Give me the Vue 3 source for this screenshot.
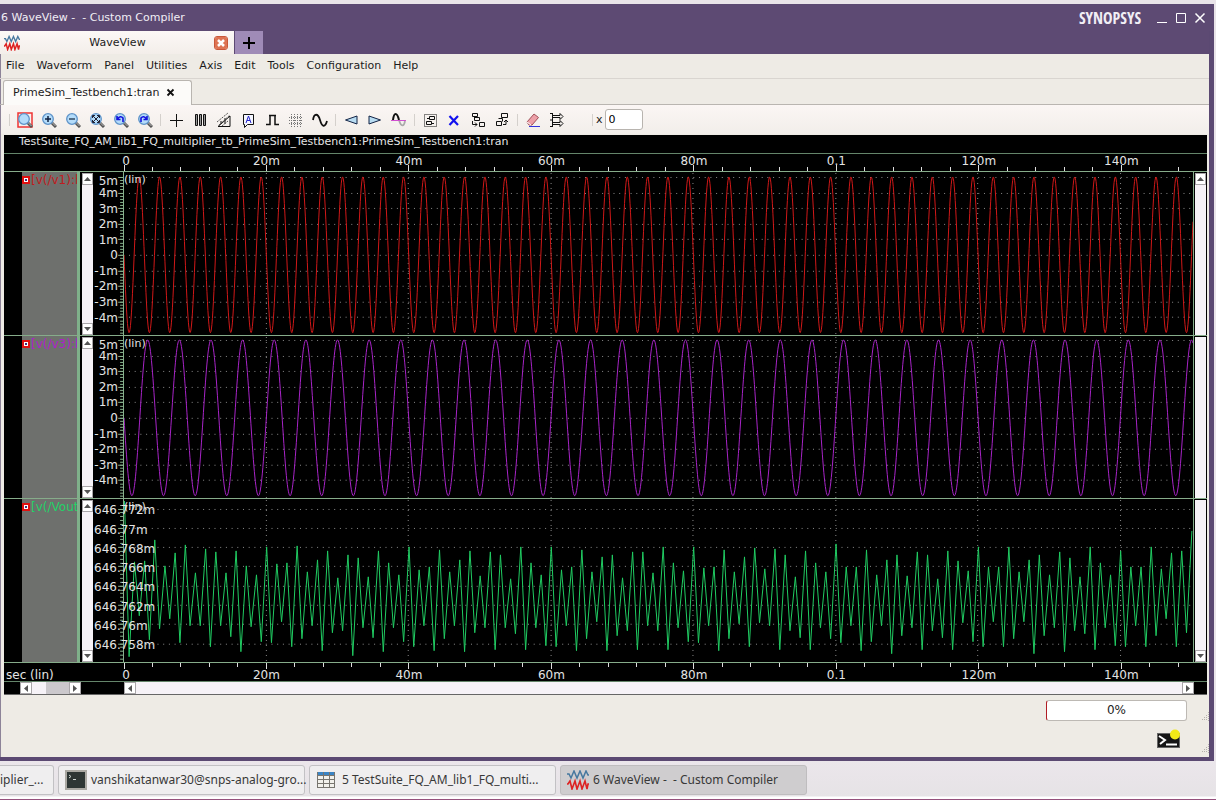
<script setup>
import { ref } from 'vue'

const menus = ['File', 'Waveform', 'Panel', 'Utilities', 'Axis', 'Edit', 'Tools', 'Configuration', 'Help']
const xValue = ref('0')

const W = 1070
const H = 163
const tMax = 0.1502
const xOf = (t) => (t / tMax) * W

const majors = [0, 0.02, 0.04, 0.06, 0.08, 0.1, 0.12, 0.14].map((t, i) => ({
  label: ['0', '20m', '40m', '60m', '80m', '0.1', '120m', '140m'][i],
  left: (t / tMax) * 100 + '%',
  x: Math.floor(xOf(t)) + 0.5,
}))
const minors = Array.from({ length: 38 }, (_, i) => i)
  .filter((i) => i % 5)
  .map((i) => Math.floor(xOf(i * 0.004)) + 0.5)

const sine = (freq, mid, amp) => {
  let d = ''
  for (let x = 0; x <= W; x += 0.5) {
    const t = (x / W) * tMax
    d += (x ? 'L' : 'M') + x + ' ' + (mid + amp * Math.sin(2 * Math.PI * freq * t)).toFixed(1)
  }
  return d
}

const peaks = [
  563, 562, 541, 567, 554, 546, 574, 550, 553, 574, 552, 567, 576, 548, 565, 564, 547, 573, 561, 552, 579, 556, 559, 578,
  552, 564, 576, 548, 571, 568, 551, 573, 561, 552, 577, 553, 556, 580, 548, 564, 576, 548, 571, 568, 551, 573, 558, 556,
  579, 553, 553, 574, 548, 564, 572, 548, 569, 568, 551, 573, 558, 549, 570, 550, 556, 578, 552, 564, 573, 545, 568, 568,
  551, 576, 561, 556, 577, 553, 556, 580, 552, 562, 572, 548, 568, 568, 548, 573, 561, 556, 576, 553, 559, 578, 548, 564,
  576, 552, 568, 568, 548, 570, 554, 552, 532,
]
const troughs = [
  658, 617, 641, 630, 620, 644, 627, 627, 648, 627, 638, 653, 628, 643, 644, 623, 648, 640, 627, 652, 634, 632, 657, 629,
  639, 653, 629, 643, 648, 627, 652, 640, 627, 653, 634, 629, 651, 629, 635, 651, 629, 647, 648, 627, 652, 640, 623, 652,
  637, 632, 651, 627, 632, 651, 629, 643, 644, 627, 652, 640, 625, 648, 624, 627, 651, 632, 639, 651, 629, 640, 644, 627,
  652, 643, 627, 655, 637, 629, 651, 632, 639, 651, 624, 643, 648, 623, 648, 640, 623, 655, 637, 629, 653, 632, 635, 651,
  629, 647, 648, 627, 648, 637, 620, 648, 634,
]
const half = xOf(1 / 1400)
let vout = 'M0.5 2'
troughs.forEach((t, k) => {
  vout += `L${((2 * k + 1) * half).toFixed(1)} ${t - 500}`
  vout += `L${Math.min(W - 1, (2 * k + 2) * half + 0.3).toFixed(1)} ${peaks[k] - 500}`
})

const ticksFrom = (first, step) => {
  const out = []
  for (let y = first; y > 3; y -= step) out.push(y)
  for (let y = first + step; y < H; y += step) out.push(y)
  return out.map((y) => Math.round(y) + 0.5)
}
const linear = (mid) => {
  const names = ['5m', '4m', '3m', '2m', '1m', '0', '-1m', '-2m', '-3m', '-4m']
  return names.map((label, i) => ({ label, y: mid + (i - 5) * 15.6, at: Math.max(9, mid + 0.5 + (i - 5) * 15.6) }))
}
const fine = ['646.772m', '646.77m', '646.768m', '646.766m', '646.764m', '646.762m', '646.76m', '646.758m'].map(
  (label, i) => ({ label, y: 9.5 + i * 19.3, at: 11 + i * 19.3 }),
)
const panels = [
  { name: '[v(/v1):h', color: 'red', labels: linear(83), ticks: ticksFrom(83, 3.12), d: sine(350, 83, 78), wide: false },
  { name: '[v(/v3):h', color: 'purple', labels: linear(82), ticks: ticksFrom(82, 3.12), d: sine(225, 82, 78), wide: false },
  { name: '[v(/Vout', color: 'green', labels: fine, ticks: ticksFrom(9.5, 3.86), d: vout, wide: true },
]

const tools = [
  [
    { n: 'Zoom box', k: 'zbox' },
    { n: 'Zoom in', k: 'zin' },
    { n: 'Zoom out', k: 'zout' },
    { n: 'Zoom fit', k: 'zfit' },
    { n: 'Undo zoom', k: 'zundo' },
    { n: 'Redo zoom', k: 'zredo' },
  ],
  [
    { n: 'Cursor', k: 'cross' },
    { n: 'Columns', k: 'cols' },
    { n: 'Measure', k: 'measure' },
    { n: 'Annotate', k: 'note' },
    { n: 'Pulse', k: 'pulse' },
    { n: 'Grid', k: 'grid' },
    { n: 'Sine', k: 'wave' },
  ],
  [
    { n: 'Previous', k: 'prev' },
    { n: 'Next', k: 'next' },
    { n: 'Threshold', k: 'thresh' },
  ],
  [
    { n: 'Select group', k: 'select' },
    { n: 'Delete', k: 'del' },
    { n: 'Ungroup', k: 'ungroup' },
    { n: 'Group', k: 'group' },
  ],
  [
    { n: 'Erase', k: 'erase' },
    { n: 'Export', k: 'export' },
  ],
]
</script>

<template>
  <div class="desktop">
    <main class="window">
      <header class="titlebar">
        <span class="caption">6 WaveView -&nbsp; - Custom Compiler</span>
        <span class="brand">SYNOPSYS</span>
        <button class="winbtn" aria-label="Minimize"><svg width="12" height="12"><path d="M1 10.5h10" /></svg></button>
        <button class="winbtn" aria-label="Maximize"><svg width="12" height="12"><path d="M1.500 1.500h9v9h-9z" /></svg></button>
        <button class="winbtn" aria-label="Close"><svg width="12" height="12"><path d="M1.500 1.500l9 9M10.500 1.500l-9 9" stroke-width="1.500" /></svg></button>
      </header>

      <div class="maintabs">
        <div class="maintab">
          <svg class="wicon" width="16" height="16" viewBox="0 0 22 20" fill="none">
            <path d="M0 4h2l2 4 3-7 3 7 3-7 3 7 3-7 2 4h1" stroke="#47789f" stroke-width="1.800" />
            <path d="M0 14h1l2-3 2 8 3-8 2 8 3-8 2 8 3-8 2 8 1-5h1" stroke="#d22" stroke-width="2" />
          </svg>
          <span>WaveView</span>
          <button class="tabclose" aria-label="Close WaveView">
            <svg width="12" height="12"><path d="M3 3l6 6M9 3l-6 6" stroke="#fff" stroke-width="2.500" /></svg>
          </button>
        </div>
        <button class="addtab" aria-label="New tab"><svg width="14" height="14"><path d="M7 1v12M1 7h12" stroke="#000" stroke-width="2" /></svg></button>
      </div>

      <nav class="menubar">
        <button v-for="m in menus" :key="m">{{ m }}</button>
      </nav>

      <div class="doctabs">
        <div class="doctab">
          <span>PrimeSim_Testbench1:tran</span>
          <button aria-label="Close document"><svg width="10" height="10"><path d="M1.500 1.500l6 6M7.500 1.500l-6 6" stroke="#111" stroke-width="1.800" /></svg></button>
        </div>
      </div>

      <div class="toolbar">
        <template v-for="(g, gi) in tools" :key="gi">
          <i class="sep" />
          <button v-for="t in g" :key="t.k" class="tool" :aria-label="t.n">
            <svg width="16" height="16" viewBox="0 0 16 16" fill="none" stroke="#111">
              <template v-if="t.k[0] === 'z'">
                <rect v-if="t.k === 'zbox'" x="1" y="1" width="14" height="14" stroke="#e33" stroke-width="1.500" />
                <path d="M10 10l5 5" stroke="#555" stroke-width="3" />
                <path d="M10.500 10l4 4" stroke="#bbb" stroke-width="1" />
                <circle cx="7" cy="7" r="5.300" fill="#b4dcfa" stroke="#5e93c9" stroke-width="1.300" />
                <path v-if="t.k === 'zin'" d="M4 7h6M7 4v6" stroke="#102040" stroke-width="1.500" />
                <path v-if="t.k === 'zout'" d="M4 7h6" stroke="#304860" stroke-width="1.500" />
                <path v-if="t.k === 'zfit'" d="M4 4l6 6M10 4l-6 6M3.500 6V3.500H6M8 3.500h2.500V6M10.500 8v2.500H8M6 10.500H3.500V8" stroke="#223" />
                <path v-if="t.k === 'zundo'" d="M4.500 7q3-4 5.500-1v4M4 4v3.500h3.500" stroke="#11d" stroke-width="1.600" />
                <path v-if="t.k === 'zredo'" d="M9.500 7q-3-4-5.500-1v4M10 4v3.500H6.500" stroke="#11d" stroke-width="1.600" />
              </template>
              <path v-else-if="t.k === 'cross'" d="M8.500 2v13M2 8.500h13" />
              <path v-else-if="t.k === 'cols'" d="M3.500 2.500h2v11h-2zM7.500 2.500h2v11h-2zM11.500 2.500h2v11h-2z" fill="#999" />
              <g v-else-if="t.k === 'measure'">
                <path d="M2 14.500h12V4zM5 9v3M9 6v6" />
                <path d="M1 10L12 1M3 13L14 3M6 14l6-5" stroke="#555" stroke-dasharray="2 1" />
              </g>
              <g v-else-if="t.k === 'note'">
                <path d="M3.500 2.500h10v10h-6l-3 3v-3h-1z" fill="#f4f6ff" />
                <path d="M6 11l2.500-7L11 11M7 8.500h3" stroke="#22c" />
              </g>
              <path v-else-if="t.k === 'pulse'" d="M2 12.500h4v-9h5v9h4M5 3.500h7" stroke-width="1.500" />
              <path v-else-if="t.k === 'grid'" d="M3.500 2v13M6.500 2v13M9.500 2v13M12.500 2v13M1 5.500h14M1 8.500h14M1 11.500h14" stroke="#777" stroke-dasharray="1 1" />
              <path v-else-if="t.k === 'wave'" d="M1 8C2 1 6 1 8 8s5 8 7 1" stroke-width="1.800" />
              <path v-else-if="t.k === 'prev'" d="M14 4v8L2.500 8z" fill="#b8dcf2" stroke="#124" />
              <path v-else-if="t.k === 'next'" d="M2 4v8l11.500-4z" fill="#b8dcf2" stroke="#124" />
              <g v-else-if="t.k === 'thresh'">
                <path d="M8 8c2 7 5 7 6 1" stroke="#aaa" stroke-width="1.800" />
                <path d="M2 8C3 0 6 0 8 8" stroke-width="2" />
                <path d="M0 8.500h15" stroke="#d050d0" />
              </g>
              <g v-else-if="t.k === 'select'">
                <rect x="2.500" y="2.500" width="12" height="12" stroke-dasharray="1 1" />
                <path d="M7.500 4.500h5v3h-5zM4.500 9.500h5v3h-5zM5 6.500h2M10 11.500h2" />
              </g>
              <path v-else-if="t.k === 'del'" d="M3.500 4l8.500 9M12 4l-8.500 9" stroke="#11e" stroke-width="2.200" />
              <path v-else-if="t.k === 'ungroup'" d="M2.500 1.500h5v3h-5zM4.500 5v3.500h5v-3h-5M9.500 10.500h5v4h-5zM2.500 9v3.500H7M5 10.500l2 2-2 2" />
              <path v-else-if="t.k === 'group'" d="M7.500 1.500h6v4h-6zM4.500 6.500h4v3M2.500 9.500h5v4h-5zM9 12.500h3V8M10 10l2-2 2 2" />
              <g v-else-if="t.k === 'erase'">
                <path d="M2 10l7-8 4.500 3.500L7 13H4z" fill="#eda0a8" stroke="#a05058" />
                <path d="M2 10l4 3" stroke="#fff" />
                <path d="M4 14.500h11" stroke="#33d" />
              </g>
              <path v-else-if="t.k === 'export'" d="M3.500 1v14M1 1.500h3M1 8h3M1 14.500h3M4 3.500h7v-2l3 3-3 3v-2H4M4 10.500h7v-2l3 3-3 3v-2H4" />
            </svg>
          </button>
        </template>
        <span class="more"></span>
        <i class="sep" />
        <label for="xval">x</label>
        <input id="xval" v-model="xValue" type="text" />
      </div>

      <section class="viewer">
        <h1>TestSuite_FQ_AM_lib1_FQ_multiplier_tb_PrimeSim_Testbench1:PrimeSim_Testbench1:tran</h1>
        <div class="ruler top">
          <div class="scale">
            <svg :viewBox="`0 0 ${W} 17`" preserveAspectRatio="none">
              <path v-for="x in minors" :key="x" :d="`M${x} 13v4`" />
              <path v-for="m in majors" :key="m.x" :d="`M${m.x} 11v6`" />
            </svg>
            <span v-for="m in majors" :key="m.label" :style="{ left: m.left }">{{ m.label }}</span>
          </div>
        </div>

        <div v-for="p in panels" :key="p.name" class="panel" :class="p.color">
          <div class="signal"><i class="mark" /><span>{{ p.name }}</span></div>
          <div class="vbar">
            <button aria-label="Scroll up"><svg width="7" height="4"><path d="M0 4l3.500-4L7 4z" /></svg></button>
            <button aria-label="Scroll down"><svg width="7" height="4"><path d="M0 0l3.500 4L7 0z" /></svg></button>
          </div>
          <div class="yaxis">
            <svg viewBox="0 0 30 163" preserveAspectRatio="none">
              <path v-for="y in p.ticks" :key="y" :d="`M27 ${y}h3`" />
              <path v-for="l in p.labels" :key="l.label" :d="`M25 ${Math.round(l.y) + 0.5}h5`" />
            </svg>
          </div>
          <div class="plot">
            <svg :viewBox="`0 0 ${W} ${H}`" preserveAspectRatio="none">
              <g class="dots">
                <path v-for="l in p.labels" :key="l.label" :d="`M5 ${Math.round(l.y) + 0.5}H${W}`" stroke-dasharray="1 4.700" />
                <path v-for="m in majors.slice(1)" :key="m.x" :d="`M${m.x} 1V${H}`" stroke-dasharray="1 4" />
              </g>
              <path class="trace" :d="p.d" />
            </svg>
            <span class="lin">(lin)</span>
          </div>
          <div class="vbar">
            <button v-if="p.color === 'red'" aria-label="Scroll all up"><svg width="7" height="4"><path d="M0 4l3.500-4L7 4z" /></svg></button>
            <i />
            <button v-if="p.wide" aria-label="Scroll all down"><svg width="7" height="4"><path d="M0 0l3.500 4L7 0z" /></svg></button>
          </div>
          <div class="ylabels" :class="{ wide: p.wide }">
            <span v-for="l in p.labels" :key="l.label" :style="{ top: (l.at / H) * 100 + '%' }">{{ l.label }}</span>
          </div>
        </div>

        <div class="ruler bottom">
          <b>sec (lin)</b>
          <div class="scale">
            <svg :viewBox="`0 0 ${W} 17`" preserveAspectRatio="none">
              <path v-for="x in minors" :key="x" :d="`M${x} 0v4`" />
              <path v-for="m in majors" :key="m.x" :d="`M${m.x} 0v6`" />
            </svg>
            <span v-for="m in majors" :key="m.label" :style="{ left: m.left }">{{ m.label }}</span>
          </div>
        </div>

        <div class="hbars">
          <div class="hbar small">
            <button aria-label="Names left"><svg width="4" height="7"><path d="M4 0L0 3.500 4 7z" /></svg></button>
            <i class="thumb" />
            <button aria-label="Names right"><svg width="4" height="7"><path d="M0 0l4 3.500L0 7z" /></svg></button>
          </div>
          <div class="hbar">
            <button aria-label="Time left"><svg width="4" height="7"><path d="M4 0L0 3.500 4 7z" /></svg></button>
            <button aria-label="Time right"><svg width="4" height="7"><path d="M0 0l4 3.500L0 7z" /></svg></button>
          </div>
        </div>
      </section>

      <footer class="status">
        <div class="progress" role="progressbar" aria-valuenow="0">0%</div>
        <svg class="grip" width="10" height="10"><path d="M9.500 1v9M7.500 4v6M5.500 6v4M3.500 8v2" /></svg>
        <button class="console" aria-label="Console">
          <svg width="24" height="20">
            <rect x="0.500" y="4.500" width="22" height="14" fill="#161616" stroke="#666" />
            <path d="M2 7l6 4-5 4" fill="none" stroke="#fff" stroke-width="2" />
            <path d="M9 15.500h11" stroke="#fff" stroke-width="2" />
            <circle cx="18" cy="5.500" r="5" fill="#f1e818" />
          </svg>
        </button>
        <svg class="grip" width="10" height="10"><path d="M9.500 1v9M7.500 4v6M5.500 6v4M3.500 8v2" /></svg>
      </footer>
    </main>

    <nav class="taskbar">
      <button class="cut">iplier_...</button>
      <button>
        <svg width="22" height="20">
          <rect x="1" y="1" width="20" height="18" fill="#2e3634" stroke="#aaa8a2" stroke-width="2" />
          <path d="M4 5l2 1.500L4 8M8 9.500h3" fill="none" stroke="#cfd6d2" />
        </svg>
        vanshikatanwar30@snps-analog-gro...
      </button>
      <button>
        <svg width="22" height="18">
          <rect x="1" y="1" width="18" height="15" fill="#f2f1ec" />
          <rect x="1" y="1" width="18" height="3" fill="#3b84c4" />
          <path d="M1.500 1v15M7.500 1v15M13.500 1v15M18.500 1v15M1 4.500h18M1 8.500h18M1 12.500h18M1 16.500h18" stroke="#77756f" />
        </svg>
        5 TestSuite_FQ_AM_lib1_FQ_multi...
      </button>
      <button class="active">
        <svg width="22" height="20" viewBox="0 0 22 20" fill="none">
          <path d="M0 4h2l2 4 3-7 3 7 3-7 3 7 3-7 2 4h1" stroke="#47789f" stroke-width="1.500" />
          <path d="M0 14h1l2-3 2 8 3-8 2 8 3-8 2 8 3-8 2 8 1-5h1" stroke="#d22" stroke-width="1.600" />
        </svg>
        6 WaveView -&nbsp; - Custom Compiler
      </button>
    </nav>
  </div>
</template>

<style>
body {
  background: #e9e4e9;
}
</style>

<style scoped>
* {
  box-sizing: border-box;
}
.desktop {
  min-height: 100vh;
  padding-top: 4px;
  display: flex;
  flex-direction: column;
  background: #e9e4e9;
  border-bottom: 1px solid #95507c;
  font: 11px/16px 'DejaVu Sans', sans-serif;
  color: #1c1c1c;
  overflow: hidden;
}
button {
  font: inherit;
  color: inherit;
  border: 0;
  padding: 0;
  margin: 0;
  background: none;
  white-space: nowrap;
}
svg {
  display: block;
  flex: none;
}
.window {
  flex: 1;
  display: flex;
  flex-direction: column;
  margin-right: 2px;
  border: solid #5b4972;
  border-width: 1px 5px 4px 0;
  background: #eeebe5;
  box-shadow: inset 1px 0 #8d8398;
}
.titlebar {
  height: 26px;
  display: flex;
  align-items: center;
  background: #5d4a73;
  color: #f1eef5;
  margin-right: -5px;
  padding-right: 5px;
}
.caption {
  flex: 1;
  padding-left: 1px;
}
.brand {
  font: bold 16px/20px 'Liberation Sans Narrow', 'Open Sans Condensed', 'DejaVu Sans Condensed', sans-serif;
  margin-right: 11px;
}
.winbtn {
  width: 19px;
  display: flex;
  justify-content: center;
}
.winbtn path {
  stroke: #fff;
  fill: none;
}
.maintabs {
  height: 23px;
  display: flex;
  gap: 1px;
  background: #5d4a73;
}
.maintab {
  width: 234px;
  display: flex;
  align-items: center;
  justify-content: space-between;
  padding: 0 7px 0 4px;
  background: linear-gradient(#fcf8f6, #f3eeea);
}
.tabclose {
  background: #de7453;
  border-radius: 2px;
  outline: 1px solid #c9583a;
}
.addtab {
  width: 28px;
  display: flex;
  align-items: center;
  justify-content: center;
  background: #9f8bb7;
}
.menubar {
  height: 25px;
  display: flex;
  align-items: center;
  gap: 12px;
  padding-left: 6px;
  border-bottom: 1px solid #d9d5d0;
}
.doctabs {
  height: 26px;
  display: flex;
  border-bottom: 1px solid #b9b5b0;
  padding: 1px 0 0 3px;
}
.doctab {
  display: flex;
  align-items: center;
  gap: 7px;
  width: 189px;
  height: 25px;
  padding-left: 9px;
  border: 1px solid #b9b5b0;
  border-bottom: 0;
  border-radius: 3px 3px 0 0;
  background: #fcfbf9;
}
.toolbar {
  height: 29px;
  display: flex;
  align-items: center;
  padding-left: 5px;
  margin-left: 1px;
  background: linear-gradient(#fbf6f4, #f2eeea);
}
.tool {
  width: 24px;
  display: flex;
  justify-content: center;
}
.sep {
  width: 7px;
  height: 12px;
  background: linear-gradient(#d4d0cc, #d4d0cc) 3px 0 / 1px 100% no-repeat;
}
.more {
  width: 20px;
  height: 4px;
  background: radial-gradient(#ccc 2px, transparent 2px);
}
.toolbar label {
  margin-right: 2px;
}
.toolbar input {
  width: 38px;
  height: 21px;
  border: 1px solid #b8b4af;
  border-radius: 3px;
  padding: 0 3px;
  font: inherit;
  background: #fff;
}
.viewer {
  flex: 1;
  display: flex;
  flex-direction: column;
  margin: 1px 2px 0 4px;
  background: #000;
  color: #e4e4e4;
  font-size: 12px;
}
h1 {
  margin: 0;
  font: 11px/14px 'DejaVu Sans', sans-serif;
  height: 19px;
  padding-left: 15px;
  border-bottom: 1px solid #64856a;
}
.ruler {
  display: flex;
  height: 18px;
  border-bottom: 1px solid #86ac8a;
}
.ruler b {
  font-weight: 400;
  width: 120px;
  margin-right: -120px;
  padding: 4px 0 0 2px;
}
.scale {
  position: relative;
  flex: 1;
  margin: 0 13px 0 120px;
}
.scale svg {
  width: 100%;
  height: 17px;
}
.scale path {
  stroke: #ddd;
  vector-effect: non-scaling-stroke;
}
.scale span {
  position: absolute;
  top: -1px;
  transform: translateX(-50%);
}
.scale span:first-of-type {
  margin-left: 2px;
}
.bottom {
  height: 19px;
  border-color: #64856a;
}
.bottom .scale span {
  top: 4px;
}
.panel {
  position: relative;
  flex: 1;
  display: grid;
  grid-template-columns: 77px 13px 30px minmax(0, 1fr) 13px;
  min-height: 120px;
  border-bottom: 1px solid #86ac8a;
}
.signal {
  margin: 0 1px 0 18px;
  display: flex;
  gap: 1px;
  border-right: 3px solid #7fb08a;
  background: #6e706d;
}
.signal span {
  flex: 1;
  min-width: 0;
  overflow: hidden;
  white-space: nowrap;
}
.red .signal {
  color: #c01c20;
}
.purple .signal {
  color: #b01fcb;
}
.green .signal {
  color: #22d268;
}
.mark {
  flex: none;
  width: 8px;
  height: 8px;
  margin-top: 4px;
  background: #fff;
  border: 2px solid #e01010;
  box-shadow: inset 0 0 0 1px #fff, inset 0 0 0 3px #403080;
}
.vbar {
  display: flex;
  flex-direction: column;
  justify-content: space-between;
  margin: 1px 1px 0;
  background: #f6f2f7;
}
.vbar button {
  height: 12px;
  display: flex;
  align-items: center;
  justify-content: center;
  background: #fff;
  border: 1px solid #a9a6a9;
}
.vbar path,
.hbar path {
  fill: #555;
}
.yaxis {
  border-right: 1px solid #86b08c;
}
.yaxis,
.plot {
  position: relative;
}
.yaxis svg,
.plot svg {
  position: absolute;
  inset: 0;
  width: 100%;
  height: 100%;
}
.yaxis path {
  stroke: #86b08c;
  vector-effect: non-scaling-stroke;
}
.plot {
  border-right: 1px solid #86b08c;
}
.dots path {
  stroke: #8a8a8a;
  vector-effect: non-scaling-stroke;
}
.trace {
  fill: none;
  stroke-width: 1;
  vector-effect: non-scaling-stroke;
}
.red .trace {
  stroke: #d01818;
}
.purple .trace {
  stroke: #a824c8;
}
.green .trace {
  stroke: #20cc62;
}
.lin {
  position: absolute;
  left: 0;
  top: 0;
  font-size: 11px;
}
.ylabels {
  position: absolute;
  left: 89px;
  top: 0;
  width: 25px;
  height: 100%;
}
.ylabels span {
  position: absolute;
  right: 0;
  line-height: 16px;
  margin-top: -8px;
}
.ylabels.wide span {
  right: auto;
  left: 1px;
}
.hbars {
  display: flex;
  height: 13px;
  padding-left: 16px;
  border-bottom: 1px solid #666;
}
.hbar {
  flex: 1;
  display: flex;
  justify-content: space-between;
  margin-right: 13px;
  background: #f6f2f7;
}
.hbar.small {
  flex: none;
  width: 61px;
  margin-right: 43px;
}
.thumb {
  width: 24px;
  margin: 0 0 0 14px;
  background: #cbc8cc;
}
.hbar button {
  width: 12px;
  display: flex;
  align-items: center;
  justify-content: center;
  background: #fff;
  border: 1px solid #a9a6a9;
}
.status {
  height: 62px;
  display: grid;
  grid-template-columns: 1fr 12px;
  align-content: space-between;
  align-items: end;
  justify-items: end;
  column-gap: 10px;
  padding: 5px 0 4px;
}
.progress {
  width: 141px;
  height: 21px;
  font-size: 12px;
  line-height: 19px;
  text-align: center;
  background: #fff;
  border: 1px solid #bdb9b4;
  border-left-color: #b01c24;
  border-radius: 3px;
}
.grip path {
  stroke: #b5b1ac;
  stroke-dasharray: 1 1;
}
.console {
  margin: 0 6px 4px 0;
}
.taskbar {
  height: 38px;
  display: flex;
  gap: 4px;
  padding: 4px 0;
  background: linear-gradient(#ebe6eb, #e6e3e6 35px, #fff 36px);
}
.taskbar button {
  width: 247px;
  height: 30px;
  display: flex;
  align-items: center;
  gap: 4px;
  padding-left: 6px;
  border: 1px solid #c2c1c4;
  border-radius: 3px;
  background: #efeeef;
  color: #383838;
  font: 12px/18px 'Noto Sans', sans-serif;
}
.taskbar button.cut {
  width: 54px;
  padding-left: 0;
  border-left: 0;
  border-radius: 0 3px 3px 0;
}
.taskbar button.active {
  background: #cfcdcf;
  border-color: #bfbdbf;
}
</style>
